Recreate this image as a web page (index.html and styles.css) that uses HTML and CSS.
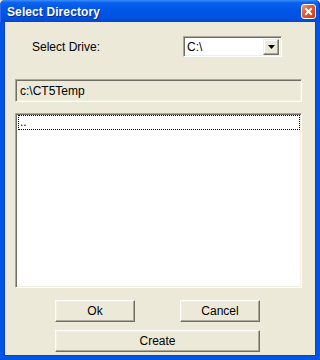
FILE: index.html
```html
<!DOCTYPE html>
<html>
<head>
<meta charset="utf-8">
<link rel="stylesheet" href="styles.css">
</head>
<body>
<div class="window">
  <div class="titlebar">
    <span class="title">Select Directory</span>
    <span class="close">
      <svg width="13" height="13" viewBox="0 0 13 13"><path d="M4 4 L9 9 M9 4 L4 9" stroke="#fff" stroke-width="2" stroke-linecap="square"/></svg>
    </span>
  </div>
  <div class="frame">
    <div class="drive-row">
      <span class="label">Select Drive:</span>
      <div class="combo">
        <span class="combo-text">C:\</span>
        <span class="combo-btn"><svg width="7" height="4" viewBox="0 0 7 4"><path d="M0 0 H7 L3.5 4 Z" fill="#000"/></svg></span>
      </div>
    </div>
    <div class="path">c:\CT5Temp</div>
    <div class="list">
      <div class="item">..</div>
    </div>
    <div class="btn-row">
      <button class="btn">Ok</button>
      <button class="btn">Cancel</button>
    </div>
    <div class="btn-row second">
      <button class="btn wide">Create</button>
    </div>
  </div>
</div>
</body>
</html>
```
FILE: styles.css
```css
html, body {
  margin: 0;
  padding: 0;
  background: #ece9d8;
}
.window {
  width: 320px;
  height: 360px;
  display: flex;
  flex-direction: column;
  font-family: "Liberation Sans", Arial, sans-serif;
  font-size: 12px;
  color: #000;
}
.titlebar {
  height: 22px;
  box-sizing: border-box;
  display: flex;
  justify-content: space-between;
  align-items: flex-start;
  padding: 0 4px 0 7px;
  background: linear-gradient(to bottom, #3c8ef8 0%, #0a62ee 12%, #0056e6 45%, #0052e0 80%, #0447cc 100%);
  border-radius: 5px 5px 0 0;
  box-shadow: inset 1px 0 #2b6cf0, inset -1px 0 #0030c8;
}
.title {
  color: #fff;
  font-weight: bold;
  font-size: 12px;
  line-height: 12px;
  margin-top: 6px;
  letter-spacing: 0.1px;
  text-shadow: 1px 1px #0a2a8a;
}
.close {
  width: 15px;
  height: 15px;
  margin-top: 4px;
  border: 1px solid #fff;
  border-radius: 3px;
  box-sizing: border-box;
  display: flex;
  align-items: center;
  justify-content: center;
  background: linear-gradient(135deg, #f09a80 0%, #e45a34 40%, #cf3a12 100%);
}
.frame {
  flex: 1;
  background: #ece9d8;
  border: 4px solid #0055e5;
  border-top: none;
  box-shadow: inset 1px 0 #0a3fd0, inset -1px 0 #0a3fd0, inset 0 -1px #0a3fd0;
  padding: 0 14px 0 11px;
  display: flex;
  flex-direction: column;
}
.drive-row {
  display: flex;
  align-items: center;
  margin-top: 14px;
  height: 21px;
}
.label {
  margin-left: 17px;
  flex: 1;
}
.combo {
  width: 99px;
  height: 21px;
  box-sizing: border-box;
  margin-right: 20px;
  background: #fff;
  border: 1px solid;
  border-color: #aca899 #fff #fff #aca899;
  box-shadow: inset 1px 1px #716f64, inset -1px -1px #f1efe2;
  display: flex;
  align-items: center;
  justify-content: space-between;
  padding: 2px 2px 2px 2px;
}
.combo-text {
  padding-left: 1px;
}
.combo-btn {
  width: 16px;
  height: 16px;
  box-sizing: border-box;
  background: #ece9d8;
  border: 1px solid;
  border-color: #f1efe2 #716f64 #716f64 #f1efe2;
  box-shadow: inset -1px -1px #aca899, inset 1px 1px #fff;
  display: flex;
  align-items: center;
  justify-content: center;
}
.path {
  margin-top: 22px;
  height: 23px;
  box-sizing: border-box;
  border: 1px solid;
  border-color: #aca899 #fff #fff #aca899;
  box-shadow: inset 1px 1px #716f64, inset -1px -1px #f1efe2;
  padding: 4px 4px 0 4px;
  line-height: 14px;
}
.list {
  margin-top: 11px;
  height: 175px;
  box-sizing: border-box;
  background: #fff;
  border: 1px solid;
  border-color: #aca899 #fff #fff #aca899;
  box-shadow: inset 1px 1px #716f64, inset -1px -1px #f1efe2;
  padding: 1px 1px 0 1px;
}
.item {
  height: 15px;
  box-sizing: border-box;
  border: 1px dotted #000;
  line-height: 12px;
  padding-left: 1px;
  margin: 0 0 0 1px;
}
.btn-row {
  display: flex;
  gap: 45px;
  margin-top: 12px;
  padding-left: 40px;
}
.btn-row.second {
  margin-top: 8px;
}
.btn {
  width: 80px;
  height: 22px;
  box-sizing: border-box;
  font-family: "Liberation Sans", Arial, sans-serif;
  font-size: 12px;
  color: #000;
  background: #ece9d8;
  border: 1px solid;
  border-color: #fff #716f64 #716f64 #fff;
  box-shadow: inset -1px -1px #aca899, inset 1px 1px #f1efe2;
  padding: 0;
  margin: 0;
}
.btn.wide {
  width: 205px;
}
```
